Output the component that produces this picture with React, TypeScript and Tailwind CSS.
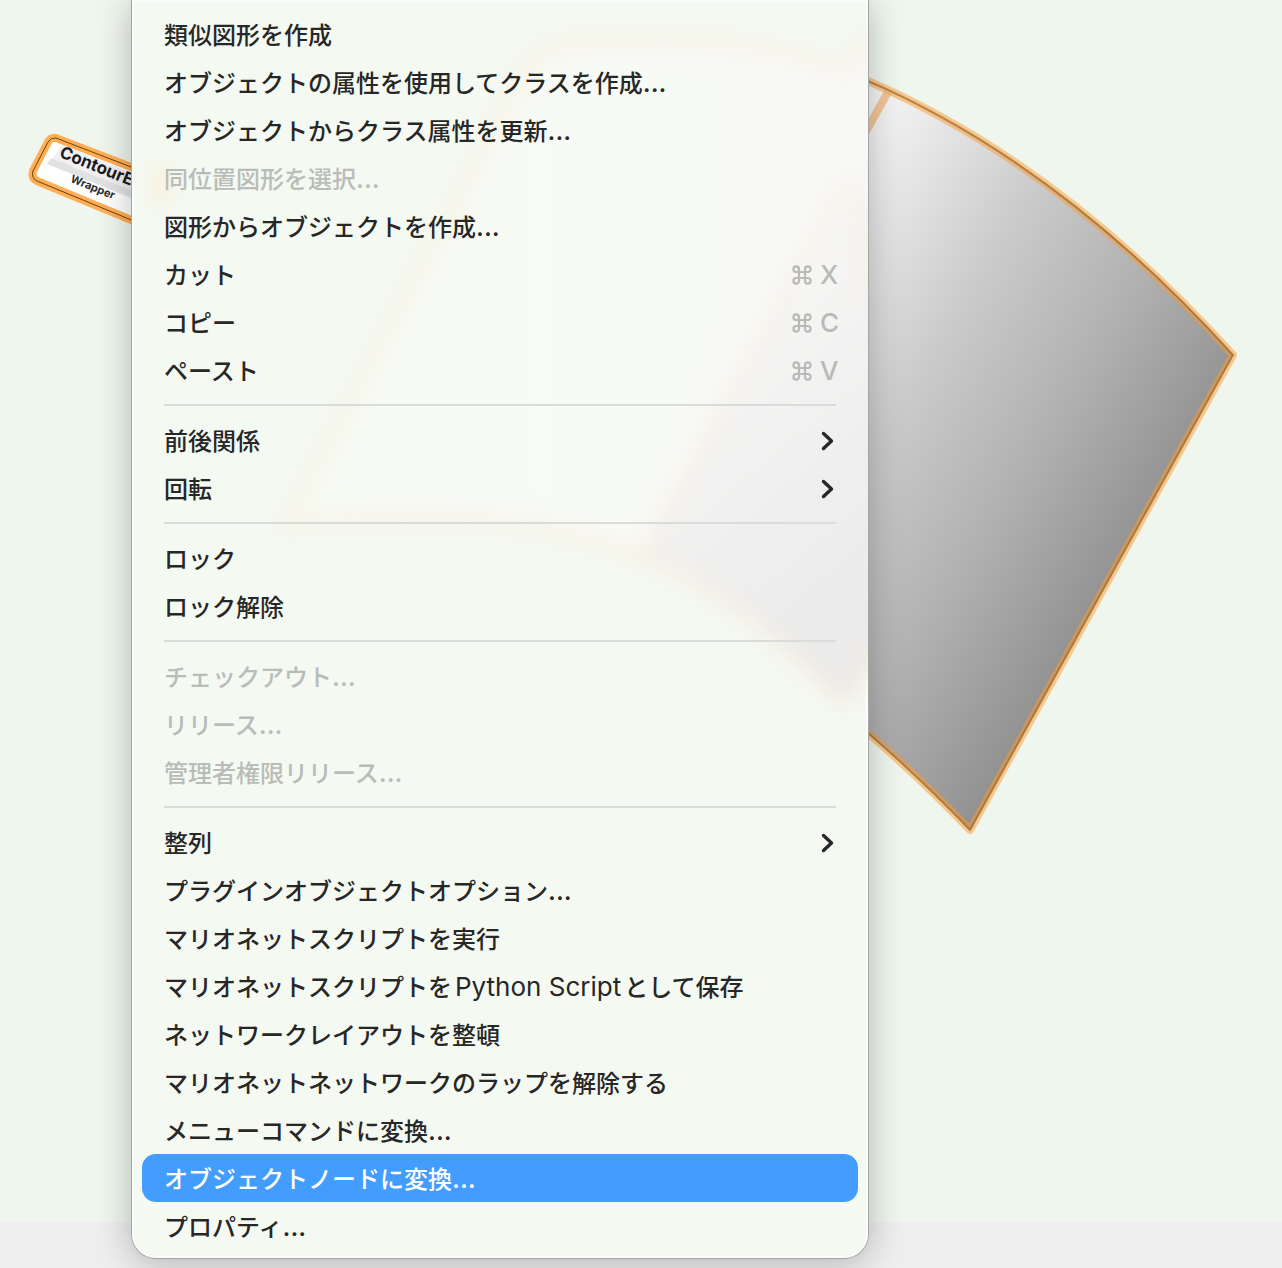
import React from "react";

type Item = {
  label: string;
  shortcut?: string;
  submenu?: boolean;
  disabled?: boolean;
  active?: boolean;
};

const groups: Item[][] = [
  [
    { label: "類似図形を作成" },
    { label: "オブジェクトの属性を使用してクラスを作成..." },
    { label: "オブジェクトからクラス属性を更新..." },
    { label: "同位置図形を選択...", disabled: true },
    { label: "図形からオブジェクトを作成..." },
    { label: "カット", shortcut: "X" },
    { label: "コピー", shortcut: "C" },
    { label: "ペースト", shortcut: "V" },
  ],
  [
    { label: "前後関係", submenu: true },
    { label: "回転", submenu: true },
  ],
  [{ label: "ロック" }, { label: "ロック解除" }],
  [
    { label: "チェックアウト...", disabled: true },
    { label: "リリース...", disabled: true },
    { label: "管理者権限リリース...", disabled: true },
  ],
  [
    { label: "整列", submenu: true },
    { label: "プラグインオブジェクトオプション..." },
    { label: "マリオネットスクリプトを実行" },
    { label: "マリオネットスクリプトをPython Scriptとして保存" },
    { label: "ネットワークレイアウトを整頓" },
    { label: "マリオネットネットワークのラップを解除する" },
    { label: "メニューコマンドに変換..." },
    { label: "オブジェクトノードに変換...", active: true },
    { label: "プロパティ..." },
  ],
];

function CommandIcon() {
  return (
    <svg
      width="20"
      height="20"
      viewBox="0 0 20 20"
      fill="none"
      stroke="currentColor"
      strokeWidth="2.2"
      aria-hidden="true"
    >
      <path d="M7 7H4a2.8 2.8 0 1 1 3-3v12a2.8 2.8 0 1 1-3-3h12a2.8 2.8 0 1 1-3 3V4a2.8 2.8 0 1 1 3 3H7" />
    </svg>
  );
}

function Chevron() {
  return (
    <svg
      width="16"
      height="20"
      viewBox="0 0 16 20"
      fill="none"
      stroke="currentColor"
      strokeWidth="3.4"
      strokeLinecap="round"
      strokeLinejoin="round"
      aria-hidden="true"
    >
      <path d="M3.5 2.5 11.5 10 3.5 17.5" />
    </svg>
  );
}

// Latin words and ellipses are set a little larger than the kana around them
function Label({ text }: { text: string }) {
  return (
    <span className="pt-0.5">
      {text.split(/([A-Za-z ]+|\.+)/).map((part, index) => {
        if (/^[A-Za-z]/.test(part)) {
          return (
            <span
              key={index}
              className="mx-[3px] text-[26px] leading-none font-normal"
            >
              {part}
            </span>
          );
        }
        if (part.startsWith(".")) {
          return (
            <span key={index} className="text-[26px] leading-none">
              {part}
            </span>
          );
        }
        return part;
      })}
    </span>
  );
}

function MenuItem({ item }: { item: Item }) {
  const color = item.active
    ? "bg-[#429dff] text-white"
    : item.disabled
      ? "text-[#b9bcb8]"
      : "text-[#262726]";

  return (
    <li>
      <button
        type="button"
        disabled={item.disabled}
        className={`flex h-12 w-full items-center justify-between rounded-[14px] px-[22px] pt-0.5 text-left font-medium ${color}`}
      >
        <Label text={item.label} />
        {item.shortcut && (
          <span className="-mr-0.5 flex items-center gap-2 text-[26px] text-[#b9bab8]">
            <CommandIcon />
            <span className="w-[18px]">{item.shortcut}</span>
          </span>
        )}
        {item.submenu && <Chevron />}
      </button>
    </li>
  );
}

// Soft colours of the drawing showing through the menu's frosted surface
function Frost() {
  return (
    <svg
      className="absolute inset-0 -z-10 h-full w-full rounded-b-3xl"
      viewBox="0 0 736 1258"
      fill="none"
      aria-hidden="true"
    >
      <defs>
        <linearGradient
          id="frost-fan"
          gradientUnits="userSpaceOnUse"
          x1="560"
          y1="280"
          x2="780"
          y2="540"
        >
          <stop offset="0" stopColor="#f8f8f7" />
          <stop offset="1" stopColor="#ebebeb" />
        </linearGradient>
        <linearGradient id="frost-panel" x1="0" y1="0" x2="1" y2="0">
          <stop offset="0" stopColor="#f6fbf4" />
          <stop offset="0.5" stopColor="#f8faf6" />
          <stop offset="1" stopColor="#f8f8f7" />
        </linearGradient>
        <filter id="soft" x="-10%" y="-10%" width="120%" height="120%">
          <feGaussianBlur stdDeviation="10" />
        </filter>
      </defs>
      <g filter="url(#soft)">
        <path
          d="M155 525 390 75Q405 46 440 44 590 30 710 70L760 20V650L713 705Q600 590 508 556 360 500 155 525Z"
          fill="url(#frost-panel)"
        />
        <path
          d="M713 185 508 556Q600 590 713 705L760 640V150Z"
          fill="url(#frost-fan)"
        />
        <path
          d="M734 30Q728 72 700 66 590 30 440 44 405 46 390 75L155 525Q360 500 508 556 600 590 700 695 725 715 735 640"
          stroke="#fbe9cf"
          strokeOpacity="0.32"
          strokeWidth="18"
        />
        <path
          d="M735 300Q730 170 706 190L508 556"
          stroke="#fbeedd"
          strokeOpacity="0.35"
          strokeWidth="18"
        />
        <ellipse
          cx="30"
          cy="185"
          rx="12"
          ry="24"
          fill="#fdeccb"
          fillOpacity="0.5"
        />
      </g>
    </svg>
  );
}

function ContextMenu() {
  return (
    <nav className="absolute top-0 left-[132px] isolate w-[736px] rounded-b-3xl bg-[#f4f9f2] px-[10px] pt-[10px] pb-2 font-['Inter','Noto_Sans_CJK_JP',sans-serif] text-2xl whitespace-nowrap shadow-[0_0_0_1px_#a3a6a3,0_4px_36px_rgba(0,0,0,0.27)] inset-shadow-[0_0_0_2px_rgba(255,255,255,0.7)]">
      <Frost />
      {groups.map((items, index) => (
        <React.Fragment key={index}>
          {index > 0 && (
            <hr className="mx-[22px] my-[10px] h-0.5 border-0 bg-[#dadcd9]" />
          )}
          <ul>
            {items.map((item) => (
              <MenuItem key={item.label} item={item} />
            ))}
          </ul>
        </React.Fragment>
      ))}
    </nav>
  );
}

function Drawing() {
  return (
    <svg
      className="absolute top-0 left-0"
      width="1282"
      height="1222"
      viewBox="0 0 1282 1222"
      fill="none"
    >
      <defs>
        <linearGradient
          id="fan"
          gradientUnits="userSpaceOnUse"
          x1="880"
          y1="110"
          x2="1262"
          y2="342"
        >
          <stop offset="0" stopColor="#f4f4f4" />
          <stop offset="0.15" stopColor="#e4e4e4" />
          <stop offset="0.39" stopColor="#cacaca" />
          <stop offset="0.67" stopColor="#b3b3b3" />
          <stop offset="1" stopColor="#929292" />
        </linearGradient>
      </defs>

      {/* Fan */}
      <path
        d="M540 45Q710 8 868 81 1060 164 1233 355L970 830Q920 778 868 733 600 490 285 525Z"
        fill="#f4f4f7"
      />
      <path
        d="M888 92Q1068 170 1233 355L970 830Q920 778 868 733 750 625 622 568Z"
        fill="url(#fan)"
      />
      <path d="M888 92 622 568" stroke="#f09a3c" strokeOpacity="0.5" strokeWidth="8" />
      <path
        d="M540 45Q710 8 868 81 1060 164 1233 355L970 830Q920 778 868 733 600 490 285 525Z"
        stroke="#ff9a2e"
        strokeOpacity="0.5"
        strokeWidth="8"
        strokeLinejoin="round"
      />
      <path
        d="M540 45Q710 8 868 81 1060 164 1233 355L970 830Q920 778 868 733 600 490 285 525Z"
        stroke="#8c5a1c"
        strokeOpacity="0.6"
        strokeWidth="2"
      />

      {/* Wrapper node */}
      <path
        d="M170 182 56 138Q51 137 48 142L33 171Q31 178 37 181L170 236Z"
        fill="#fff"
      />
      <g transform="translate(59 158) rotate(22)">
        <path d="M-2-13H110V9H-7Z" fill="#f0f0f2" />
        <path d="M-7 3H110V10H-9Z" fill="#e2e2e4" />
      </g>
      <path
        d="M170 182 56 138Q51 137 48 142L33 171Q31 178 37 181L170 236"
        stroke="#ffae55"
        strokeWidth="8"
      />
      <path
        d="M170 182 56 138Q51 137 48 142L33 171Q31 178 37 181L170 236"
        stroke="#6b4208"
      />
      <g transform="translate(59 158) rotate(22)" fontFamily="Inter, sans-serif">
        <text x="-1" y="-1" fill="#1b1b1f" fontSize="17" fontWeight="700">
          ContourExtrude
        </text>
        <text x="19" y="18" fill="#2b2b2f" fontSize="11" fontWeight="700">
          Wrapper
        </text>
      </g>
    </svg>
  );
}

export default function App() {
  return (
    <div className="relative flex min-h-screen flex-col overflow-hidden bg-[#eff6ee]">
      <main className="flex-1">
        <Drawing />
        <ContextMenu />
      </main>
      <footer className="h-[46px] bg-[#eeeeee]" />
    </div>
  );
}
